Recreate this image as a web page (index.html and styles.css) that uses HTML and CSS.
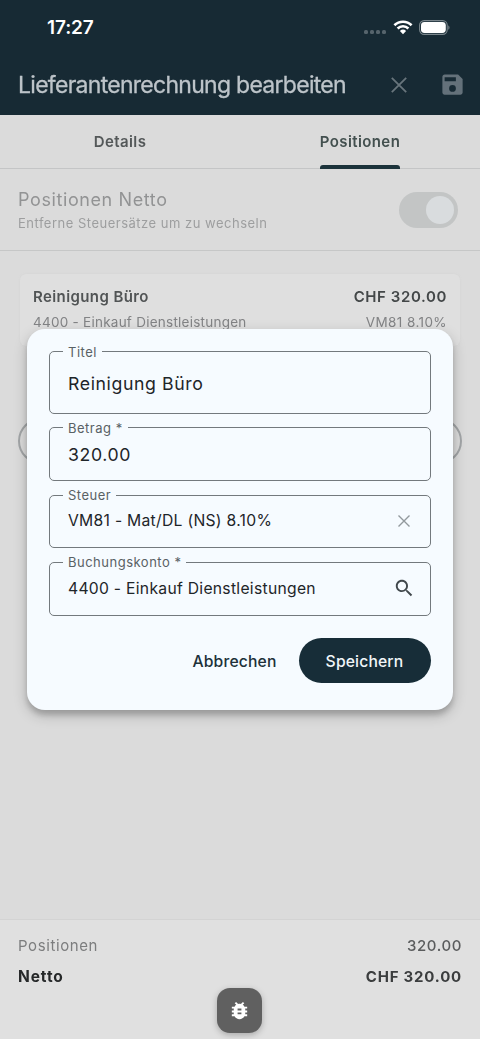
FILE: index.html
```html
<!DOCTYPE html>
<html lang="de">
<head>
<meta charset="utf-8">
<title>Lieferantenrechnung bearbeiten</title>
<link rel="stylesheet" href="styles.css">
</head>
<body>
<div class="screen">
  <header class="header">
    <div class="status">
      <span class="time">17:27</span>
      <span class="status-icons">
        <span class="dots"><i></i><i></i><i></i><i></i></span>
        <svg class="wifi" width="20" height="15" viewBox="0 0 20 15"><g fill="none" stroke="#fff" stroke-width="2.6"><path d="M1.4 5.2a12.3 12.3 0 0 1 17.2 0"/><path d="M4.6 8.5a7.7 7.7 0 0 1 10.8 0"/></g><path fill="#fff" d="M6.9 10.9a4.5 4.5 0 0 1 6.2 0L10 14.2z"/></svg>
        <svg class="battery" width="31" height="15" viewBox="0 0 31 15"><rect x=".6" y=".6" width="27.6" height="13.8" rx="4.6" fill="none" stroke="#7a868c" stroke-width="1.1"/><rect x="2" y="2" width="24.8" height="11" rx="3.4" fill="#fff"/><path d="M29.3 5.2c1.6.7 1.6 3.9 0 4.6z" fill="#7a868c"/></svg>
      </span>
    </div>
    <div class="appbar soft">
      <h1 class="title">Lieferantenrechnung bearbeiten</h1>
      <svg class="close" width="16" height="16" viewBox="0 0 16 16"><path d="M.8.8l14.4 14.4M15.2.8L.8 15.2" stroke="#68757c" stroke-width="1.8"/></svg>
      <svg class="save" width="27" height="27" viewBox="0 0 24 24"><path fill="#64717a" d="M17 3H5c-1.1 0-2 .9-2 2v14c0 1.1.9 2 2 2h14c1.1 0 2-.9 2-2V7zM12 18.5a3 3 0 1 1 0-6 3 3 0 0 1 0 6zM15 9H5V5.5h10z"/></svg>
    </div>
  </header>
  <nav class="tabs soft">
    <div class="tab"><span class="tab-label">Details</span></div>
    <div class="tab active"><span class="tab-label">Positionen</span></div>
  </nav>
  <section class="toggle-row soft">
    <div class="toggle-text">
      <div class="toggle-title">Positionen Netto</div>
      <div class="toggle-sub">Entferne Steuersätze um zu wechseln</div>
    </div>
    <div class="switch"><span class="knob"></span></div>
  </section>
  <main class="list soft">
    <article class="card">
      <div class="card-row card-main"><span class="card-name">Reinigung Büro</span><span class="card-amount">CHF 320.00</span></div>
      <div class="card-row card-sub"><span class="card-account">4400 - Einkauf Dienstleistungen</span><span class="card-tax">VM81 8.10%</span></div>
    </article>
    <div class="add"></div>
  </main>
  <footer class="footer soft">
    <div class="sum"><span class="sum-label">Positionen</span><span class="sum-value">320.00</span></div>
    <div class="sum net"><span class="net-label">Netto</span><span class="net-value">CHF 320.00</span></div>
  </footer>

  <div class="dialog">
    <fieldset class="field tall"><legend>Titel</legend><span class="value large">Reinigung Büro</span></fieldset>
    <fieldset class="field"><legend>Betrag *</legend><span class="value large">320.00</span></fieldset>
    <fieldset class="field"><legend>Steuer</legend><span class="value">VM81 - Mat/DL (NS) 8.10%</span>
      <svg class="clear" width="12" height="12" viewBox="0 0 12 12"><path d="M.5.5l11 11M11.5.5l-11 11" stroke="#92999d" stroke-width="1.4"/></svg></fieldset>
    <fieldset class="field last"><legend>Buchungskonto *</legend><span class="value">4400 - Einkauf Dienstleistungen</span>
      <svg class="search" width="22.5" height="22.5" viewBox="0 0 24 24"><path fill="#41484c" d="M15.5 14h-.79l-.28-.27C15.41 12.59 16 11.11 16 9.5 16 5.91 13.09 3 9.5 3S3 5.91 3 9.5 5.91 16 9.5 16c1.61 0 3.09-.59 4.23-1.57l.27.28v.79l5 4.99L20.49 19l-4.99-5zm-6 0C7.01 14 5 11.99 5 9.5S7.01 5 9.5 5 14 7.01 14 9.5 11.99 14 9.5 14z"/></svg></fieldset>
    <div class="actions"><span class="cancel">Abbrechen</span><span class="submit">Speichern</span></div>
  </div>

  <div class="bug"><svg width="23" height="23" viewBox="0 0 24 24"><path fill="#fff" d="M20 8h-2.81c-.45-.78-1.07-1.45-1.82-1.96L17 4.41 15.59 3l-2.17 2.17C12.96 5.06 12.49 5 12 5c-.49 0-.96.06-1.41.17L8.41 3 7 4.41l1.62 1.63C7.88 6.55 7.26 7.22 6.81 8H4v2h2.09c-.05.33-.09.66-.09 1v1H4v2h2v1c0 .34.04.67.09 1H4v2h2.81c1.04 1.79 2.97 3 5.19 3s4.15-1.21 5.19-3H20v-2h-2.09c.05-.33.09-.66.09-1v-1h2v-2h-2v-1c0-.34-.04-.67-.09-1H20V8zm-6 8h-4v-2h4v2zm0-4h-4v-2h4v2z"/></svg></div>
</div>
</body>
</html>
```
FILE: styles.css
```css
* { box-sizing: border-box; }
body { margin: 0; font-family: Inter, "Liberation Sans", sans-serif; }
svg { display: block; flex: none; }
.screen { position: relative; width: 480px; height: 1039px; display: flex; flex-direction: column; background: #dbdbdb; overflow: hidden; white-space: nowrap; }
.soft { filter: blur(0.4px); }
.header { height: 115px; background: #172a34; }
.status { height: 54px; padding: 0 30px 0 47px; display: flex; align-items: center; justify-content: space-between; }
.time { color: #fff; font-size: 19px; font-weight: 600; letter-spacing: -0.1px; line-height: 20px; padding-top: 2px; }
.status-icons { display: flex; align-items: center; }
.dots { display: flex; gap: 2px; margin: 10px 7px 0 0; }
.dots i { width: 4px; height: 4px; border-radius: 1.5px; background: #56646c; }
.wifi { margin-right: 6px; }
.appbar { height: 61px; display: flex; align-items: center; padding: 0 14px 0 18px; }
.title { margin: 0; flex: 1; font-size: 23px; font-weight: 400; letter-spacing: -0.72px; line-height: 30px; color: #bdc4c9; -webkit-text-stroke: 0.3px #bdc4c9; }
.close { margin-right: 32px; }
.tabs { height: 54px; display: flex; border-bottom: 1.5px solid #c4c5c6; }
.tab { flex: 1; display: flex; justify-content: center; font-size: 15px; font-weight: 600; letter-spacing: 0.4px; color: #545859; }
.tab-label { display: flex; flex-direction: column; height: 54px; line-height: 53px; }
.active .tab-label { color: #43504f; }
.active .tab-label::after { content: ""; flex: none; height: 4px; margin-top: -3px; border-radius: 3px 3px 0 0; background: #1c333b; }
.toggle-row { height: 82px; padding: 0 22px 0 18px; display: flex; justify-content: space-between; align-items: center; border-bottom: 1.5px solid #c6c7c7; }
.toggle-text { padding-top: 2px; }
.toggle-title { font-size: 18px; letter-spacing: 0.6px; line-height: 24px; color: #929394; }
.toggle-sub { font-size: 13px; letter-spacing: 0.5px; line-height: 22px; color: #9d9e9f; }
.switch { width: 59px; height: 36px; border-radius: 18px; padding: 4px; background: #c3c5c5; display: flex; justify-content: flex-end; }
.knob { width: 28px; height: 28px; border-radius: 50%; background: #d9dcde; }
.list { flex: 1; padding: 23px 18px 0; }
.card { height: 72px; margin: 0 2px; padding: 11px 13px; background: #dfdfdf; border-radius: 6px; box-shadow: 0 0 2px #d2d2d2; }
.card-row { display: flex; justify-content: space-between; }
.card-main { font-size: 15px; font-weight: 600; line-height: 24px; color: #515455; }
.card-name { letter-spacing: 0.4px; }
.card-amount { letter-spacing: 0.6px; color: #434748; }
.card-sub { font-size: 13.5px; line-height: 27px; letter-spacing: 0.25px; color: #828385; }
.card-tax { letter-spacing: 0.4px; }
.add { height: 46px; margin-top: 72px; border: 2px solid #a2a5a7; border-radius: 23px; }
.footer { height: 120px; padding: 10px 18px; background: #e0e0e0; border-top: 1px solid #d3d3d3; }
.sum { display: flex; justify-content: space-between; font-size: 15px; line-height: 31px; letter-spacing: 0.6px; color: #7c7d7e; }
.sum-value { color: #5a5c5d; font-weight: 500; }
.net { font-weight: 700; color: #262829; }
.net-label { font-size: 15.5px; letter-spacing: 0.9px; }
.net-value { color: #3b3d3e; letter-spacing: 0.8px; }

.dialog { position: absolute; left: 27px; top: 329px; width: 426px; height: 381px; padding: 14.5px 22.5px 0 22px; background: #f6fbff; border-radius: 18px; box-shadow: 0 5px 5px rgba(0,0,0,.14), 0 5px 14px rgba(0,0,0,.22); display: flex; flex-direction: column; gap: 6px; }
.field { min-width: 0; height: 61.4px; margin: 0; padding: 8px 14px 0 13px; border: 1px solid #73797d; border-radius: 5px; display: flex; align-items: center; justify-content: space-between; color: #1e2529; }
.field.tall { height: 70.2px; padding-top: 13px; }
.field.last { padding-top: 7px; padding-right: 13px; }
.field legend { padding: 0 5px; font-size: 13px; line-height: 16px; letter-spacing: 0.5px; color: #596165; }
.value { font-size: 15.7px; letter-spacing: 0.28px; margin-left: 5px; }
.value.large { font-size: 17.7px; letter-spacing: 0.6px; }
.clear { margin-right: 6px; }
.search { margin-right: 1px; }
.actions { display: flex; justify-content: flex-end; align-items: center; gap: 22px; margin-top: 16.5px; font-size: 15.7px; font-weight: 500; letter-spacing: 0.15px; }
.cancel { color: #203039; padding-top: 1px; }
.submit { width: 132px; height: 45px; padding-top: 1px; border-radius: 23px; background: #172d38; color: #f1f6f9; display: flex; align-items: center; justify-content: center; }
.bug { position: absolute; left: 217px; top: 988px; width: 45px; height: 45px; border-radius: 13px; background: #606060; display: flex; align-items: center; justify-content: center; box-shadow: 0 2px 6px rgba(0,0,0,.25); }
```
